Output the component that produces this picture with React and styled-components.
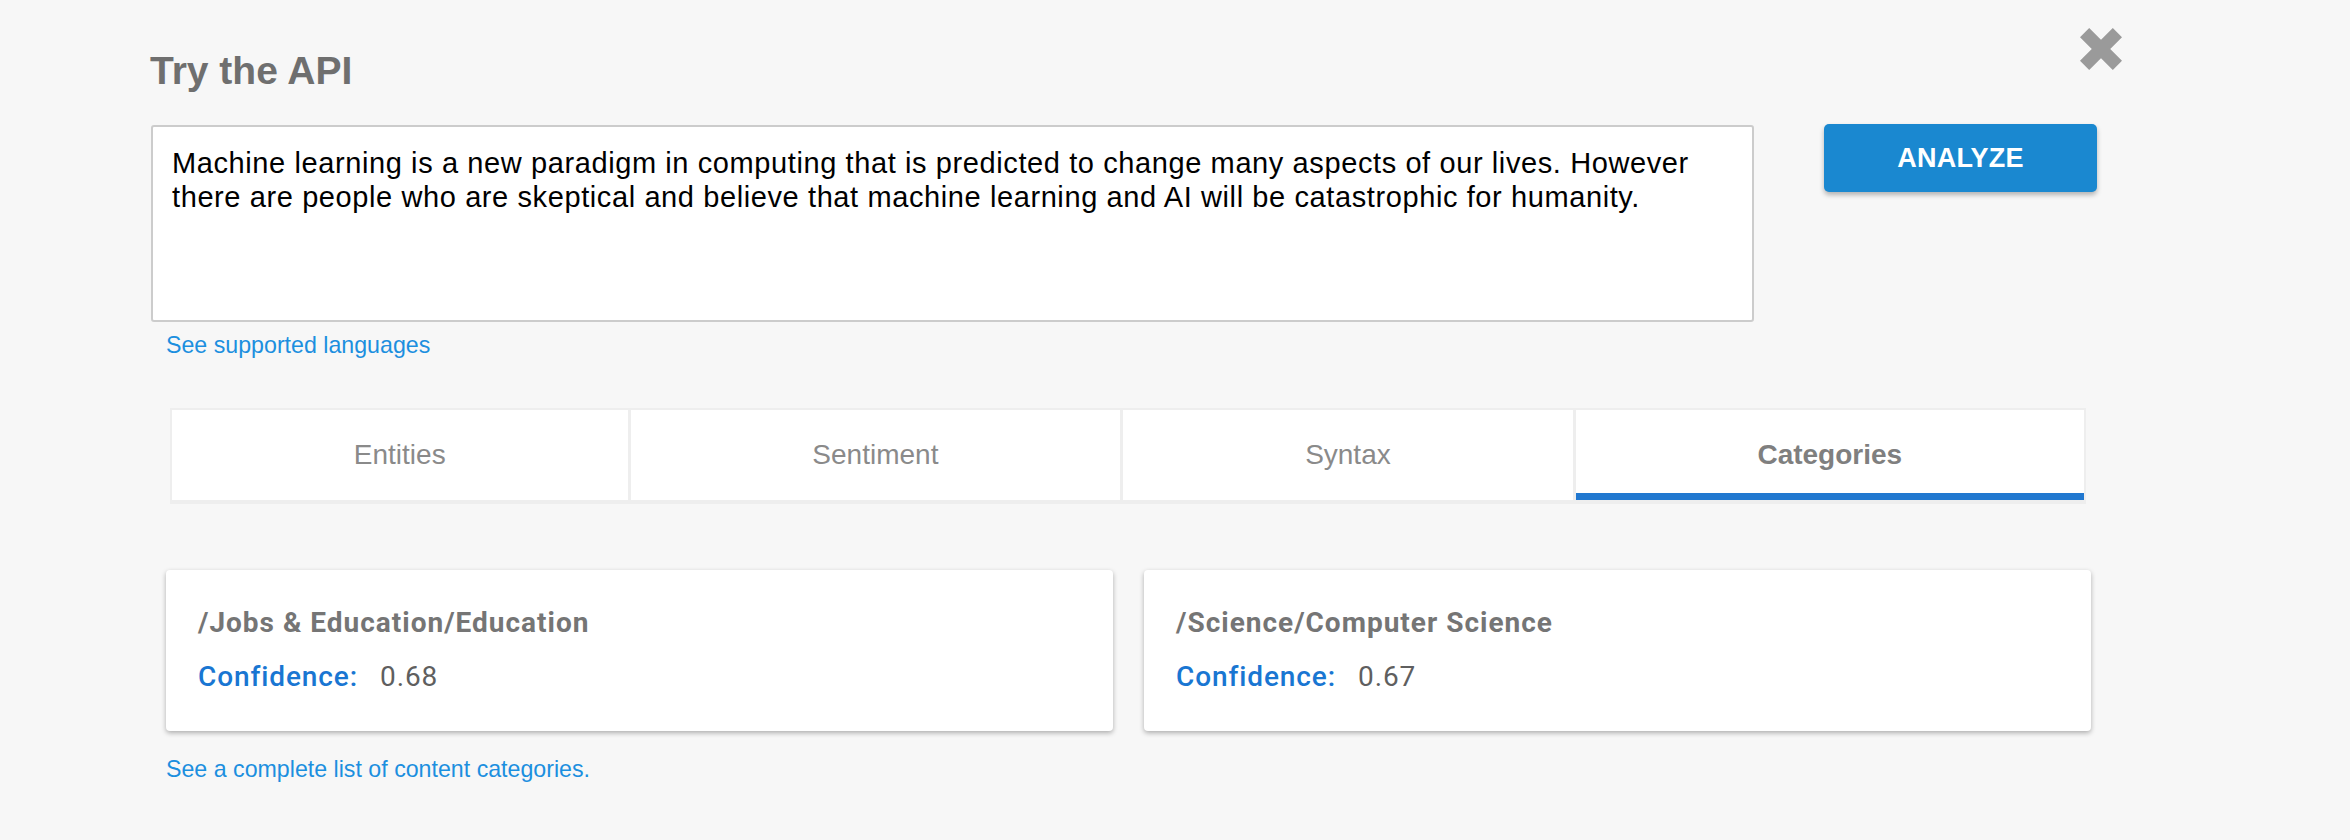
import React from "react";
import styled, { createGlobalStyle } from "styled-components";

const GlobalStyle = createGlobalStyle`
  html, body {
    margin: 0;
    padding: 0;
    background: #f7f7f7;
  }
  body {
    font-family: "Liberation Sans", Arial, sans-serif;
  }
  * { box-sizing: border-box; }
`;

const Page = styled.div`
  width: 1972px;
  padding: 28px 0 40px 150px;
  box-sizing: content-box;
`;

const Header = styled.div`
  display: flex;
  justify-content: space-between;
  align-items: flex-start;
`;

const Title = styled.h1`
  margin: 20px 0 0 0;
  font-family: "Liberation Sans", Arial, sans-serif;
  font-weight: 700;
  font-size: 39px;
  line-height: 45px;
  color: #6f6f6f;
`;

const CloseButton = styled.button`
  width: 42px;
  height: 42px;
  padding: 0;
  border: none;
  background: transparent;
  cursor: pointer;
  display: block;
  svg { display: block; }
`;

const InputRow = styled.div`
  display: flex;
  align-items: flex-start;
  margin-top: 32px;
`;

const TextArea = styled.textarea`
  margin: 0 0 0 1px;
  width: 1603px;
  height: 197px;
  border: 2px solid #cccccc;
  border-radius: 3px;
  background: #fff;
  padding: 19px 19px;
  font-family: "Liberation Sans", Arial, sans-serif;
  font-size: 29px;
  letter-spacing: 0.6px;
  line-height: 34px;
  color: #000;
  resize: none;
  outline: none;
  overflow: hidden;
`;

const AnalyzeButton = styled.button`
  margin: -1px 0 0 70px;
  width: 273px;
  height: 68px;
  border: none;
  border-radius: 5px;
  background: #1a88d0;
  color: #fff;
  font-family: "Liberation Sans", Arial, sans-serif;
  font-weight: 700;
  font-size: 27px;
  letter-spacing: 0.2px;
  box-shadow: 0 3px 5px rgba(0, 0, 0, 0.28);
  cursor: pointer;
`;

const Link = styled.a`
  display: block;
  width: max-content;
  margin: ${(p) => p.$top}px 0 0 16px;
  font-family: "Liberation Sans", Arial, sans-serif;
  font-size: 23.2px;
  line-height: 26px;
  color: #1c8fdf;
  text-decoration: none;
  cursor: pointer;
`;

const Tabs = styled.div`
  display: flex;
  gap: 3px;
  width: 1916px;
  margin: 50px 0 0 20px;
  padding: 2px 2px 4px 2px;
  background: #eeeeee;
`;

const Tab = styled.div`
  flex: 1 1 auto;
  height: 90px;
  display: flex;
  align-items: center;
  justify-content: center;
  background: #fff;
  font-family: "Liberation Sans", Arial, sans-serif;
  font-size: 28px;
  font-weight: ${(p) => (p.$active ? 700 : 400)};
  color: ${(p) => (p.$active ? "#7f7f7f" : "#8a8a8a")};
  border-bottom: 7px solid ${(p) => (p.$active ? "#2178d0" : "transparent")};
  padding-top: 7px;
  cursor: pointer;
`;

const Cards = styled.div`
  display: grid;
  grid-template-columns: 1fr 1fr;
  gap: 31px;
  width: 1925px;
  margin: 66px 0 0 16px;
`;

const Card = styled.div`
  background: #fff;
  border-radius: 4px;
  box-shadow: 0 2px 5px rgba(0, 0, 0, 0.3);
  padding: 37px 32px 38px 32px;
  font-family: Roboto, "Liberation Sans", sans-serif;
`;

const CardTitle = styled.div`
  font-size: 28px;
  line-height: 32px;
  font-weight: 700;
  letter-spacing: 1px;
  color: #757575;
`;

const ConfidenceRow = styled.div`
  display: flex;
  gap: 22px;
  margin-top: 22px;
  font-size: 28px;
  line-height: 32px;
  letter-spacing: 0.9px;
`;

const ConfLabel = styled.span`
  font-weight: 500;
  color: #1976d2;
`;

const ConfValue = styled.span`
  font-weight: 400;
  color: #5f5f5f;
`;

const sampleText =
  "Machine learning is a new paradigm in computing that is predicted to change many aspects of our lives. However there are people who are skeptical and believe that machine learning and AI will be catastrophic for humanity.";

const tabs = ["Entities", "Sentiment", "Syntax", "Categories"];

const categories = [
  { name: "/Jobs & Education/Education", confidence: "0.68" },
  { name: "/Science/Computer Science", confidence: "0.67" },
];

export default function App() {
  return (
    <>
      <GlobalStyle />
      <Page>
        <Header>
          <Title>Try the API</Title>
          <CloseButton aria-label="Close">
            <svg width="42" height="42" viewBox="0 0 42 42">
              <path
                d="M4.6 4.6 L37.4 37.4 M37.4 4.6 L4.6 37.4"
                stroke="#9a9a9a"
                strokeWidth="13"
                strokeLinecap="butt"
                fill="none"
              />
            </svg>
          </CloseButton>
        </Header>
        <InputRow>
          <TextArea defaultValue={sampleText} spellCheck={false} />
          <AnalyzeButton>ANALYZE</AnalyzeButton>
        </InputRow>
        <Link $top={10}>See supported languages</Link>
        <Tabs>
          {tabs.map((t) => (
            <Tab key={t} $active={t === "Categories"}>
              {t}
            </Tab>
          ))}
        </Tabs>
        <Cards>
          {categories.map((c) => (
            <Card key={c.name}>
              <CardTitle>{c.name}</CardTitle>
              <ConfidenceRow>
                <ConfLabel>Confidence:</ConfLabel>
                <ConfValue>{c.confidence}</ConfValue>
              </ConfidenceRow>
            </Card>
          ))}
        </Cards>
        <Link $top={25}>See a complete list of content categories.</Link>
      </Page>
    </>
  );
}
